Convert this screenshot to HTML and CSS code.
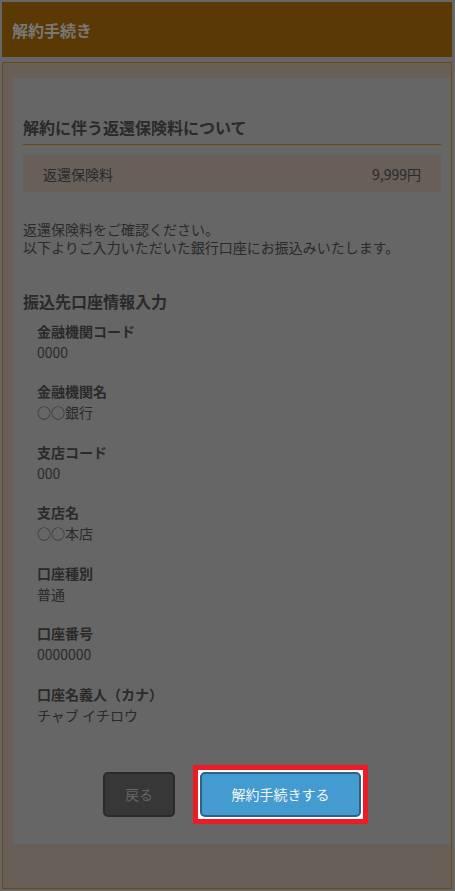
FILE: index.html
```html
<!DOCTYPE html>
<html lang="ja">
<head>
<meta charset="utf-8">
<title>解約手続き</title>
<link rel="stylesheet" href="styles.css">
</head>
<body>
<div class="page">
  <header class="header">解約手続き</header>
  <div class="outer">
    <div class="panel">
      <h2 class="heading">解約に伴う返還保険料について</h2>
      <div class="fee-row"><span>返還保険料</span><span>9,999円</span></div>
      <p class="note">返還保険料をご確認ください。<br>以下よりご入力いただいた銀行口座にお振込みいたします。</p>
      <h3 class="subheading">振込先口座情報入力</h3>
      <dl class="fields">
        <div class="field"><dt>金融機関コード</dt><dd>0000</dd></div>
        <div class="field"><dt>金融機関名</dt><dd>○○銀行</dd></div>
        <div class="field"><dt>支店コード</dt><dd>000</dd></div>
        <div class="field"><dt>支店名</dt><dd>○○本店</dd></div>
        <div class="field"><dt>口座種別</dt><dd>普通</dd></div>
        <div class="field"><dt>口座番号</dt><dd>0000000</dd></div>
        <div class="field"><dt>口座名義人（カナ）</dt><dd>チャブ イチロウ</dd></div>
      </dl>
      <div class="actions">
        <button class="btn btn-back" type="button">戻る</button>
        <span class="highlight"><button class="btn btn-main" type="button">解約手続きする</button></span>
      </div>
    </div>
  </div>
</div>
</body>
</html>
```

FILE: styles.css
```css
* { box-sizing: border-box; }
html, body { margin: 0; padding: 0; }
body {
  background: #666666;
  font-family: "Noto Sans CJK JP", "Noto Sans", sans-serif;
  color: #2a2a2a;
  font-size: 14px;
}
.page { padding: 2px 3px 0 2px; }
.header {
  height: 55px;
  background: #5a3905;
  color: #787878;
  font-weight: bold;
  font-size: 16px;
  display: flex;
  align-items: center;
  padding-left: 10px;
}
.outer {
  margin-top: 5px;
  border: 1px solid #6b4a10;
  background: #675f58;
  padding: 15px 0 44px 10px;
}
.panel {
  background: #666666;
  padding: 37px 10px 27px 10px;
}
.heading {
  margin: 0;
  font-size: 16px;
  font-weight: bold;
  line-height: 24px;
  padding-bottom: 5px;
  border-bottom: 1px solid #6b4a0a;
}
.fee-row {
  margin-top: 10px;
  height: 37px;
  display: flex;
  justify-content: space-between;
  align-items: center;
  padding: 0 20px;
  background: #675f58;
  font-size: 14px;
}
.note {
  margin: 28px 0 0;
  line-height: 18px;
  font-size: 14px;
}
.subheading {
  margin: 33px 0 0;
  font-size: 16px;
  font-weight: bold;
  line-height: 24px;
}
.fields {
  margin: 7.5px 0 0;
  padding-left: 14px;
}
.field { margin-bottom: 18.5px; }
.field:last-child { margin-bottom: 0; }
.field dt {
  font-weight: bold;
  line-height: 21px;
}
.field dd {
  margin: 0;
  line-height: 21px;
}
.actions {
  margin-top: 46px;
  display: flex;
  justify-content: center;
  align-items: center;
  gap: 25px;
}
.btn {
  display: block;
  height: 45px;
  font-family: inherit;
  font-size: 14px;
  border-radius: 5px;
  padding: 0;
}
.btn-back {
  width: 72px;
  background: #373737;
  border: 2px solid #2a2a2a;
  color: #666666;
}
.highlight {
  display: block;
  margin: -7px;
  padding: 2px;
  background: #ffffff;
  border: 5px solid #ed1c24;
}
.btn-main {
  width: 161px;
  background: #449bd0;
  border: 2px solid #2d6284;
  color: #f2f6fa;
}
```
